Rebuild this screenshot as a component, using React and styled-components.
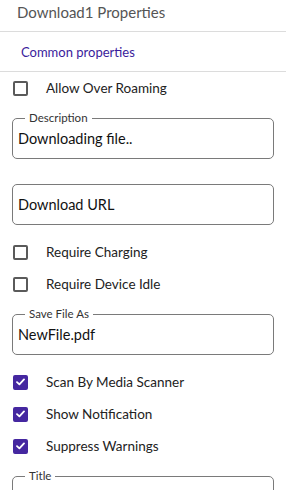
import styled, { createGlobalStyle } from "styled-components";

const GlobalStyle = createGlobalStyle`
  body {
    margin: 0;
    background: white;
    font-family: "Lato", "Noto Sans", sans-serif;
  }
`;

const Panel = styled.div`
  width: 286px;
  height: 490px;
  overflow: hidden;
  background: white;
`;

const Header = styled.div`
  height: 32px;
  box-sizing: border-box;
  padding: 3px 0 0 17px;
  font-size: 15px;
  line-height: 18px;
  color: #555;
  border-bottom: 1px solid #dcdcdc;
`;

const Tab = styled.div`
  height: 39px;
  display: flex;
  align-items: center;
  padding-left: 21px;
  font-size: 13px;
  color: #3a1c9c;
  border-bottom: 1px solid #dcdcdc;
`;

const Form = styled.div`
  display: flex;
  flex-direction: column;
  padding: 0 12px;
`;

const CheckRow = styled.label`
  height: 32px;
  display: flex;
  align-items: center;
  gap: 18px;
  padding-left: 1px;
  font-size: 13.5px;
  color: #222;
`;

const Box = styled.span`
  width: 15px;
  height: 15px;
  box-sizing: border-box;
  border-radius: 2px;
  border: 2px solid ${(p) => (p.checked ? "#4527a0" : "#5a5a5a")};
  background: ${(p) => (p.checked ? "#4527a0" : "white")};
  display: flex;
  align-items: center;
  justify-content: center;
`;

const FieldWrap = styled.div`
  padding: 14px 0 11px;
`;

const Field = styled.div`
  position: relative;
  height: 41px;
  box-sizing: border-box;
  border: 1px solid #7a7a7a;
  border-radius: 5px;
  display: flex;
  align-items: center;
  padding-left: 5px;
  font-size: 14.5px;
  color: #111;
`;

const Legend = styled.span`
  position: absolute;
  left: 12px;
  top: -8px;
  padding: 0 4px;
  background: white;
  font-size: 11.5px;
  line-height: 14px;
  color: #333;
`;

const Check = () => (
  <svg width="9" height="8" viewBox="0 0 9 8">
    <path d="M1 4.2 L3.4 6.4 L8 1.4" fill="none" stroke="white" strokeWidth="1.8" strokeLinecap="round" strokeLinejoin="round" />
  </svg>
);

const CheckItem = ({ checked, children }) => (
  <CheckRow>
    <Box checked={checked}>{checked && <Check />}</Box>
    {children}
  </CheckRow>
);

const TextField = ({ label, value }) => (
  <FieldWrap>
    <Field>
      {label && <Legend>{label}</Legend>}
      {value}
    </Field>
  </FieldWrap>
);

export default function App() {
  return (
    <Panel>
      <GlobalStyle />
      <Header>Download1 Properties</Header>
      <Tab>Common properties</Tab>
      <Form>
        <CheckItem>Allow Over Roaming</CheckItem>
        <TextField label="Description" value="Downloading file.." />
        <TextField value="Download URL" />
        <CheckItem>Require Charging</CheckItem>
        <CheckItem>Require Device Idle</CheckItem>
        <TextField label="Save File As" value="NewFile.pdf" />
        <CheckItem checked>Scan By Media Scanner</CheckItem>
        <CheckItem checked>Show Notification</CheckItem>
        <CheckItem checked>Suppress Warnings</CheckItem>
        <TextField label="Title" value="" />
      </Form>
    </Panel>
  );
}
